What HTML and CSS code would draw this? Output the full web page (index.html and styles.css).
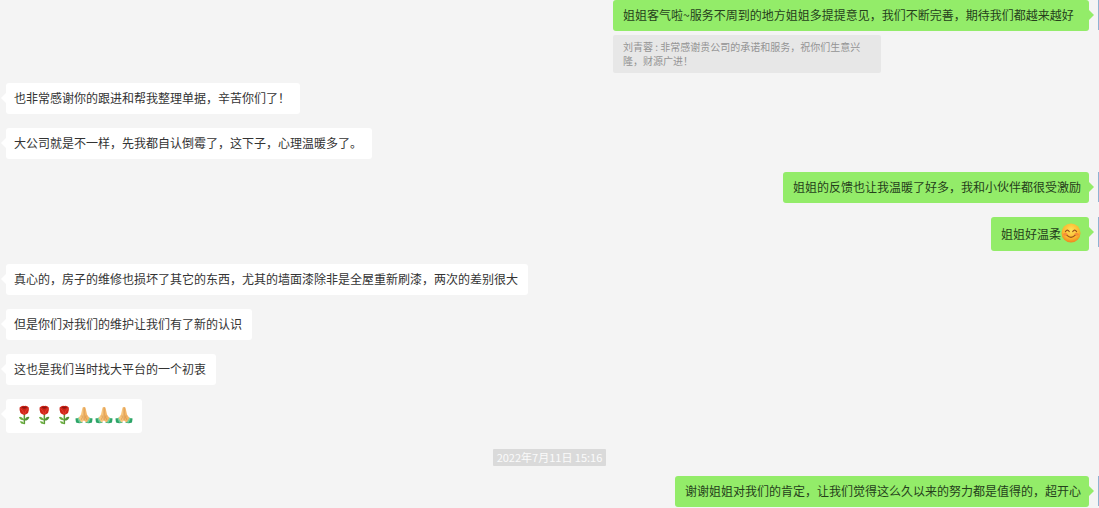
FILE: index.html
```html
<!DOCTYPE html>
<html lang="zh-CN">
<head>
  <meta charset="UTF-8" />
  <meta name="viewport" content="width=device-width, initial-scale=1.0"/>
  <title>聊天记录</title>
  <link rel="stylesheet" href="styles.css">
</head>
<body>
  <!-- 表情图形 -->
  <svg class="defs" aria-hidden="true">
    <defs>
      <radialGradient id="faceFill" cx="50%" cy="35%" r="65%">
        <stop offset="0" stop-color="#ffe25a"/>
        <stop offset="0.65" stop-color="#fbb92f"/>
        <stop offset="1" stop-color="#ee8420"/>
      </radialGradient>
      <symbol id="smile" viewBox="0 0 20 20">
        <circle cx="10" cy="10" r="9.5" fill="url(#faceFill)"/>
        <ellipse cx="4.4" cy="11.3" rx="2.1" ry="1.5" fill="#f5763c" opacity="0.65"/>
        <ellipse cx="15.6" cy="11.3" rx="2.1" ry="1.5" fill="#f5763c" opacity="0.65"/>
        <path d="M4.4 8.6Q6.3 5.6 8.3 8.6M11.7 8.6Q13.7 5.6 15.6 8.6" fill="none" stroke="#98511a" stroke-width="1.1" stroke-linecap="round"/>
        <path d="M6 12.4Q10 16.2 14 12.4" fill="none" stroke="#98511a" stroke-width="1.1" stroke-linecap="round"/>
      </symbol>
      <symbol id="rose" viewBox="0 0 20 20">
        <path d="M10.4 9Q10.2 14 10.4 18.6" fill="none" stroke="#5b9a38" stroke-width="1.5" stroke-linecap="round"/>
        <path d="M10.3 14.8Q7 10.6 5 12.2Q6.2 15.6 10.3 15.2Z" fill="#69ad3d"/>
        <path d="M10.4 14.8Q12.4 10.8 15.4 12Q14.4 15.8 10.4 15.6Z" fill="#4f9134"/>
        <path d="M10.3 18.5Q8.4 15.4 5.8 16.4Q7 19.4 10.3 18.9Z" fill="#69ad3d"/>
        <path d="M5.6 2.6Q8 .2 10.2 1Q13 .2 14.8 2.6Q15.8 9 10.2 10Q4.8 9 5.6 2.6Z" fill="#cf2418"/>
        <path d="M7.4 2.6Q10 4.8 13 2.4Q10.6.4 7.4 2.6Z" fill="#8f1410"/>
        <path d="M6.3 3.6Q9.4 5 10 9.2M14 3.6Q11.4 5 10.8 9" fill="none" stroke="#e84838" stroke-width="0.7"/>
      </symbol>
      <symbol id="pray" viewBox="0 0 20 20">
        <path d="M1.4 13.4L6 12.4L8.6 17.8Q5 18.6 2 17.6Z" fill="#2da468"/>
        <path d="M18.6 13.4L14 12.4L11.4 17.8Q15 18.6 18 17.6Z" fill="#2da468"/>
        <path d="M3.2 13.2L5.6 12.6L7.6 17.6L5.4 17.8ZM16.8 13.2L14.4 12.6L12.4 17.6L14.6 17.8Z" fill="#72cf9b"/>
        <path d="M10 2.2Q8.6 1.2 8.3 3.6L7 9.4L4.6 13L7.4 17.4L10 15.4Z" fill="#f8c67e"/>
        <path d="M10 2.2Q11.4 1.2 11.7 3.6L13 9.4L15.4 13L12.6 17.4L10 15.4Z" fill="#f3b668"/>
        <path d="M10 2.4V15.2M8 10.4Q9 12.6 7.2 14.8M12 10.4Q11 12.6 12.8 14.8" fill="none" stroke="#bf7a38" stroke-width="0.5"/>
      </symbol>
    </defs>
  </svg>

  <main class="chat">
    <div class="message sent">
      <div class="content">
        <p class="bubble">姐姐客气啦~服务不周到的地方姐姐多提提意见，我们不断完善，期待我们都越来越好</p>
        <blockquote class="quote">刘青蓉 : 非常感谢贵公司的承诺和服务，祝你们生意兴隆，财源广进！</blockquote>
      </div>
      <span class="avatar"></span>
    </div>

    <div class="message received after-quote">
      <p class="bubble">也非常感谢你的跟进和帮我整理单据，辛苦你们了！</p>
    </div>
    <div class="message received">
      <p class="bubble">大公司就是不一样，先我都自认倒霉了，这下子，心理温暖多了。</p>
    </div>

    <div class="message sent">
      <p class="bubble">姐姐的反馈也让我温暖了好多，我和小伙伴都很受激励</p>
      <span class="avatar"></span>
    </div>
    <div class="message sent">
      <p class="bubble with-emoji">姐姐好温柔<svg class="emoji" role="img" aria-label="微笑"><use href="#smile"/></svg></p>
      <span class="avatar"></span>
    </div>

    <div class="message received">
      <p class="bubble">真心的，房子的维修也损坏了其它的东西，尤其的墙面漆除非是全屋重新刷漆，两次的差别很大</p>
    </div>
    <div class="message received">
      <p class="bubble">但是你们对我们的维护让我们有了新的认识</p>
    </div>
    <div class="message received">
      <p class="bubble">这也是我们当时找大平台的一个初衷</p>
    </div>
    <div class="message received">
      <p class="bubble with-emoji">
        <svg class="emoji" role="img" aria-label="玫瑰"><use href="#rose"/></svg>
        <svg class="emoji" role="img" aria-label="玫瑰"><use href="#rose"/></svg>
        <svg class="emoji" role="img" aria-label="玫瑰"><use href="#rose"/></svg>
        <svg class="emoji" role="img" aria-label="合十"><use href="#pray"/></svg>
        <svg class="emoji" role="img" aria-label="合十"><use href="#pray"/></svg>
        <svg class="emoji" role="img" aria-label="合十"><use href="#pray"/></svg>
      </p>
    </div>

    <time class="timestamp" datetime="2022-07-11T15:16">2022年7月11日 15:16</time>

    <div class="message sent after-time">
      <p class="bubble">谢谢姐姐对我们的肯定，让我们觉得这么久以来的努力都是值得的，超开心</p>
      <span class="avatar"></span>
    </div>
  </main>
</body>
</html>
```
FILE: styles.css
```css
* { box-sizing: border-box; }
body { margin: 0; background: #f4f4f4; color: #333; font-family: "Noto Sans CJK SC", sans-serif; font-size: 12px; line-height: 15px; }
p, blockquote { margin: 0; }
.defs { position: absolute; width: 0; height: 0; }

.chat { display: flex; flex-direction: column; }
.message { display: flex; align-items: flex-start; margin-top: 14px; }
.message:first-child { margin-top: 0; }
.received { padding-left: 6px; }
.sent { justify-content: flex-end; }
.received + .sent { margin-top: 13px; }
.sent + .received { margin-top: 13px; }
.sent + .after-quote { margin-top: 10px; }
.timestamp + .after-time { margin-top: 10px; }
.content { display: flex; flex-direction: column; align-items: flex-start; }
.content .bubble { min-width: 476px; }

.bubble { position: relative; padding: 7px 10px 9px 8px; border-radius: 3px; background: #fff; }
.sent .bubble { padding: 7px 8px 9px 10px; background: #93ec69; color: #25401b; }
/* 气泡小三角 */
.bubble::before { content: ""; position: absolute; top: 10px; left: -5px; border: 5px solid transparent; border-left: 0; border-right-color: #fff; }
.sent .bubble::before { left: auto; right: -5px; border: 5px solid transparent; border-right: 0; border-left-color: #93ec69; }

.bubble.with-emoji { display: flex; align-items: center; padding-top: 6px; padding-bottom: 8px; padding-right: 8px; }
.emoji { width: 20px; height: 20px; flex: none; }

.quote { width: 268px; margin-top: 4px; padding: 5px 14px 5px 10px; border-radius: 2px; background: #e7e7e7; color: #949494; font-size: 10px; line-height: 14px; }
.avatar { flex: none; width: 1px; height: 30px; margin-left: 9px; background: #8fb3d3; }
.timestamp { align-self: center; margin-top: 16px; padding: 1px 4px; border-radius: 1px; background: #dadada; color: #fafafa; font-size: 11px; line-height: 15px; }
```
